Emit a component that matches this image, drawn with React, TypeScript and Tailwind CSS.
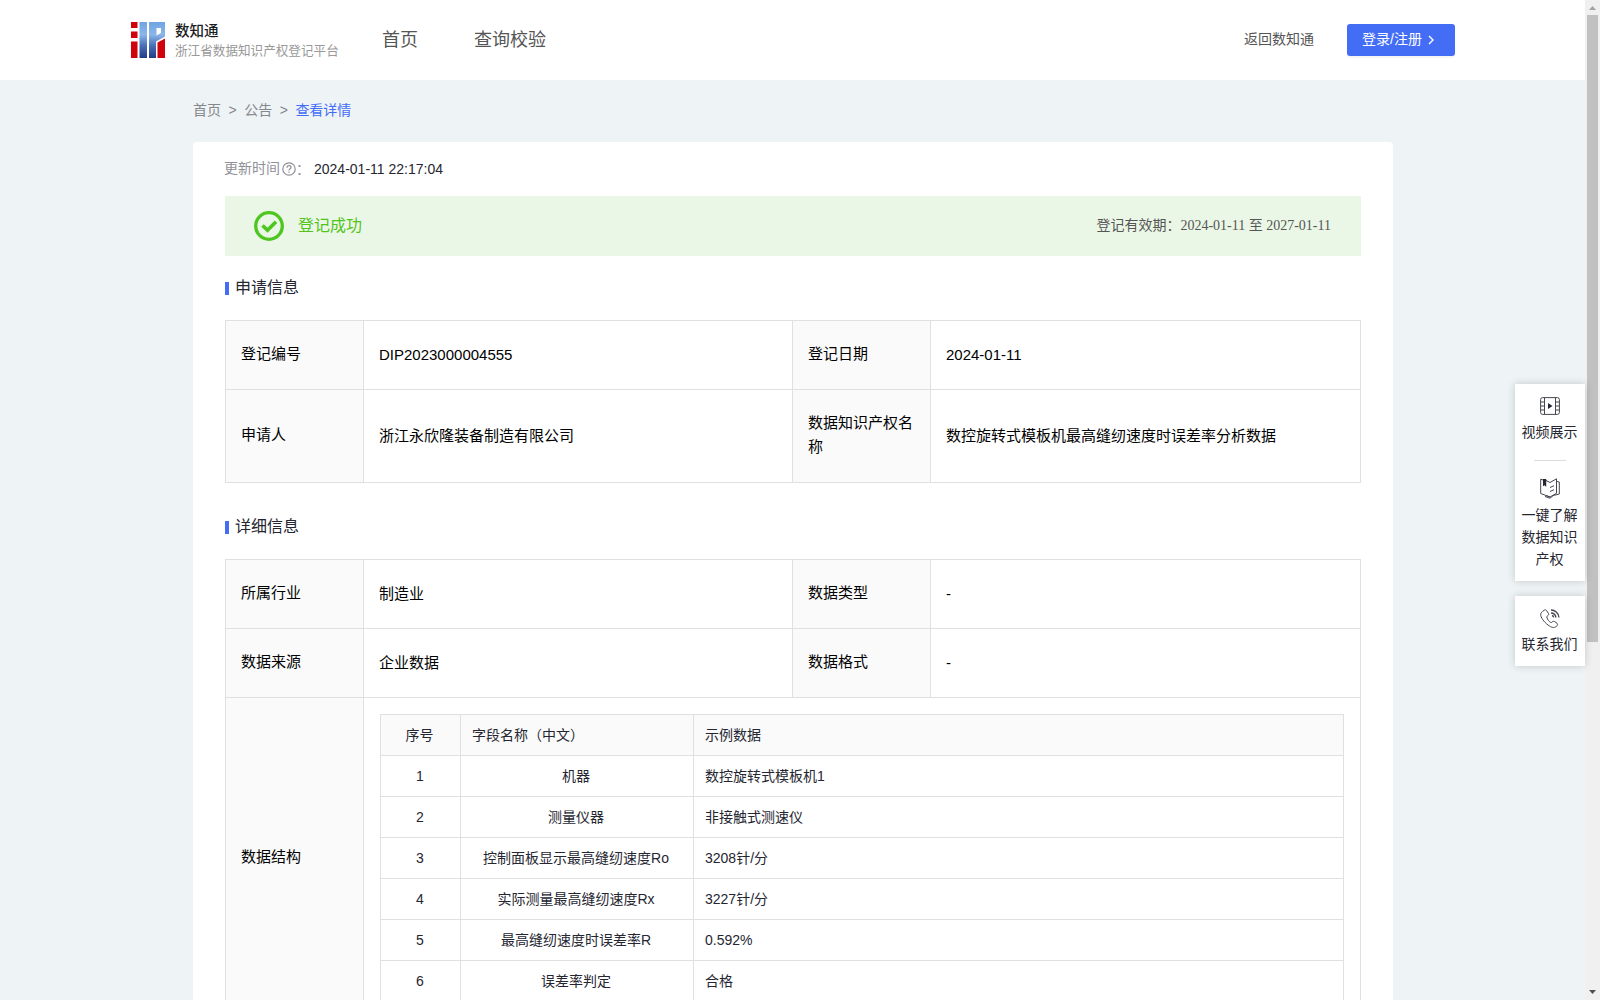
import React from "react";

interface InfoRow {
  label: string;
  value: string;
  label2: string;
  value2: string;
  height: string;
}

const applyRows: InfoRow[] = [
  { label: "登记编号", value: "DIP2023000004555", label2: "登记日期", value2: "2024-01-11", height: "h-[69px]" },
  {
    label: "申请人",
    value: "浙江永欣隆装备制造有限公司",
    label2: "数据知识产权名称",
    value2: "数控旋转式模板机最高缝纫速度时误差率分析数据",
    height: "h-[93px]",
  },
];

const detailRows: InfoRow[] = [
  { label: "所属行业", value: "制造业", label2: "数据类型", value2: "-", height: "h-[69px]" },
  { label: "数据来源", value: "企业数据", label2: "数据格式", value2: "-", height: "h-[69px]" },
];

const fields = [
  { name: "机器", sample: "数控旋转式模板机1" },
  { name: "测量仪器", sample: "非接触式测速仪" },
  { name: "控制面板显示最高缝纫速度Ro", sample: "3208针/分" },
  { name: "实际测量最高缝纫速度Rx", sample: "3227针/分" },
  { name: "最高缝纫速度时误差率R", sample: "0.592%" },
  { name: "误差率判定", sample: "合格" },
];

const Logo = () => (
  <svg width="34" height="36" viewBox="0 0 34 36" className="shrink-0">
    <defs>
      <linearGradient id="logoBlue" x1="0" y1="0" x2="0" y2="36" gradientUnits="userSpaceOnUse">
        <stop offset="0" stopColor="#6fa5e2" />
        <stop offset="0.35" stopColor="#8bb6e8" />
        <stop offset="0.65" stopColor="#4a70b8" />
        <stop offset="1" stopColor="#243a86" />
      </linearGradient>
    </defs>
    <path d="M0 0h6.500v6H0zM0 9.500h6.500V16H0zM0 19.500h6.500V36H0z" fill="#d0020b" />
    <path
      d="M8.500 0H16v36H8.500zM18 0h16v14.500l-9 5V36h-7zM25.500 6v7.500l4.500-2.500V6z"
      fill="url(#logoBlue)"
      fillRule="evenodd"
    />
    <path d="M26.500 20.500l7.500-4V36h-7.500z" fill="#d0020b" />
  </svg>
);

const SectionTitle = ({ children }: { children: React.ReactNode }) => (
  <div className="flex h-6 items-center text-[16px] text-[#252631]">
    <span className="mr-[6px] mt-[3px] h-[13px] w-1 bg-[#446df6]" />
    <span className="pt-px">{children}</span>
  </div>
);

const InfoCells = ({ row }: { row: InfoRow }) => (
  <tr className={row.height}>
    <td className="border border-[#e0e0e0] bg-[#fafafa] px-[15px] pb-0.5">{row.label}</td>
    <td className="border border-[#e0e0e0] px-[15px] pb-px">{row.value}</td>
    <td className="border border-[#e0e0e0] bg-[#fafafa] px-[15px] pb-0.5">{row.label2}</td>
    <td className="border border-[#e0e0e0] px-[15px] pb-px">{row.value2}</td>
  </tr>
);

const InfoTable = ({ rows, children }: { rows: InfoRow[]; children?: React.ReactNode }) => (
  <table className="w-[1136px] table-fixed border-collapse text-[15px] leading-6 text-black">
    <colgroup>
      <col className="w-[138px]" />
      <col className="w-[429px]" />
      <col className="w-[138px]" />
      <col className="w-[430px]" />
    </colgroup>
    <tbody>
      {rows.map((row) => (
        <InfoCells key={row.label} row={row} />
      ))}
      {children}
    </tbody>
  </table>
);

const FieldTable = () => (
  <table className="w-[964px] table-fixed border-collapse text-[14px] leading-5 text-[#252631]">
    <colgroup>
      <col className="w-[80px]" />
      <col className="w-[233px]" />
      <col className="w-[650px]" />
    </colgroup>
    <tbody>
      <tr className="h-[41px] bg-[#fafafa]">
        <td className="border border-[#e0e0e0] pb-px pr-0.5 text-center">序号</td>
        <td className="border border-[#e0e0e0] px-[11px] pb-px">字段名称（中文）</td>
        <td className="border border-[#e0e0e0] px-[11px] pb-px">示例数据</td>
      </tr>
      {fields.map((f, i) => (
        <tr key={f.name} className="h-[41px]">
          <td className="border border-[#e0e0e0] pb-px pr-px text-center">{i + 1}</td>
          <td className="border border-[#e0e0e0] pb-px pr-0.5 text-center">{f.name}</td>
          <td className="border border-[#e0e0e0] px-[11px] pb-px">{f.sample}</td>
        </tr>
      ))}
    </tbody>
  </table>
);

const Header = () => (
  <header className="flex h-20 items-center bg-white pl-[131px] pr-[130px]">
    <Logo />
    <div className="ml-[10px] w-[164px] whitespace-nowrap pt-[2px]">
      <div className="text-[14.5px] font-medium leading-[20px] text-[#1d1d1f]">数知通</div>
      <div className="text-[12.6px] leading-[20px] text-[#999]">浙江省数据知识产权登记平台</div>
    </div>
    <nav className="ml-[43px] flex gap-14 text-[18px] text-[#555]">
      <span>首页</span>
      <span>查询校验</span>
    </nav>
    <span className="ml-auto pb-px text-[14px] text-[#555]">返回数知通</span>
    <button className="ml-[33px] flex h-8 w-[108px] items-center rounded-[3px] bg-[#446df6] pb-px pl-[15px] text-[14px] text-white shadow-[0_2px_0_rgba(0,0,0,0.04)]">
      登录/注册
      <svg width="7" height="10" viewBox="0 0 7 10" fill="none" stroke="currentColor" strokeWidth="1.4" className="ml-[6px]">
        <path d="M1 1l4 4-4 4" />
      </svg>
    </button>
  </header>
);

const SideBar = () => (
  <aside className="absolute right-[15px] top-[384px] w-[70px] text-center text-[14px] leading-[22px] text-[#252631]">
    <div className="flex h-[197px] flex-col items-center bg-white shadow-[0_0_8px_rgba(0,0,0,0.18)]">
      <svg width="20" height="18" viewBox="0 0 20 18" fill="none" stroke="#45464f" className="mt-[13px]">
        <rect x="0.600" y="0.600" width="18.800" height="16.800" rx="2" />
        <path d="M4.500 1v16M15.500 1v16M1 5h3.500M1 9h3.500M1 13h3.500M15.500 5H19M15.500 9H19M15.500 13H19" />
        <path d="M8 6l4.500 3L8 12z" fill="#252631" stroke="none" />
      </svg>
      <div className="mr-px mt-[6px]">视频展示</div>
      <div className="mt-[17px] h-px w-8 bg-[#dcdcdc]" />
      <svg width="20" height="21" viewBox="0 0 20 21" fill="none" stroke="#45464f" strokeLinejoin="round" className="mt-[17px]">
        <path d="M.7 1.200L3 2M6 2.500l4 2L16.500.8v14.500L10 19l-9.300-3.500V1.200M10 19l-4-1.500" />
        <path d="M17 3.500l2.300.5v12l-6 1.500L10 20.200 5 18.500M10 9.500l4-1.800M10 13.500l4-1.800" />
        <path d="M3 1h3.200v8L4.600 7.300 3 8.200z" fill="#252631" stroke="none" />
      </svg>
      <div className="mr-px mt-[5px] w-14">一键了解数据知识产权</div>
    </div>
    <div className="mt-[15px] flex h-[70px] flex-col items-center bg-white shadow-[0_0_8px_rgba(0,0,0,0.18)]">
      <svg width="20" height="20" viewBox="0 0 20 20" fill="none" stroke="#45464f" className="mt-[13px]">
        <path d="M2.500 2.500l2-1.500c.8-.5 1.500-.2 2 .5l2 3c.5.800.2 1.500-.5 2-1.500 1-1.500 1.500-.5 3.500 1 2 2.500 3.500 4 3.500 1.500-1.500 2.500-1.500 3.500-.7l2 1.500c.8.700.7 1.700 0 2.500-2 2.200-4.500 2.200-7.500.2C5.500 14.500 1.500 10 .8 6.500.5 4.700 1 3.500 2.500 2.500z" />
        <path d="M11 1c4 0 7.500 3 8 7.500M11 4c2.500 0 4.500 2 5 4.500M12 6.500c1 .2 1.500.8 1.700 1.800" strokeWidth="1.300" />
      </svg>
      <div className="mr-px mt-[4px]">联系我们</div>
    </div>
  </aside>
);

const ScrollBar = () => (
  <div className="flex h-full w-[15px] shrink-0 flex-col items-center bg-[#f0f0f0]">
    <svg width="15" height="15" viewBox="0 0 15 15">
      <path d="M4 10h7L7.500 6z" fill="#a3a3a3" />
    </svg>
    <div className="h-[627px] w-[11px] bg-[#c1c1c1]" />
    <svg width="15" height="15" viewBox="0 0 15 15" className="mt-auto">
      <path d="M4 5h7L7.500 9z" fill="#505050" />
    </svg>
  </div>
);

export default function App() {
  return (
    <div className="relative flex h-[1000px] w-[1600px] overflow-hidden font-['Liberation_Sans','Noto_Sans_CJK_SC',sans-serif]">
      <div className="h-full w-[1585px] overflow-hidden bg-[#eef3f6]">
        <Header />
        <main className="ml-[193px] w-[1200px]">
          <div className="flex h-[62px] items-center gap-[7.5px] pb-px text-[14px] text-[#86878c]">
            <span>首页</span>
            <span>&gt;</span>
            <span>公告</span>
            <span>&gt;</span>
            <span className="text-[#446df6]">查看详情</span>
          </div>
          <div className="h-[1100px] rounded-[4px] bg-white px-8 pt-4">
            <div className="flex h-[22px] items-center text-[14px] text-[#909097]">
              <span className="-ml-px pb-px">更新时间</span>
              <svg width="14" height="14" viewBox="0 0 14 14" fill="none" stroke="#909097" strokeWidth="1.2" className="ml-[2px]">
                <circle cx="7" cy="7" r="6.200" />
                <path d="M5 5.700C5 4.400 5.900 3.700 7 3.700s2 .7 2 1.800C9 6.800 7 6.800 7 8.400M7 9.400v1.300" />
              </svg>
              <span className="w-[18px]">：</span>
              <span className="pt-px text-[14px] text-[#252631]">2024-01-11 22:17:04</span>
            </div>
            <div className="mt-4 flex h-[60px] items-center bg-[#ebf7e6] pl-[29px] pr-[30px]">
              <svg width="30" height="30" viewBox="0 0 30 30" fill="none" stroke="#4dc71f">
                <circle cx="15" cy="15" r="13.300" strokeWidth="3.300" />
                <path d="M8.500 14.500l5 4.700L22 10.700" strokeWidth="3.700" />
              </svg>
              <span className="ml-[14px] text-[16px] text-[#52c41a]">登记成功</span>
              <span className="ml-auto pb-[2px] font-['Liberation_Serif','Noto_Sans_CJK_SC',serif] text-[14px] text-[#555]">
                登记有效期：2024-01-11 至 2027-01-11
              </span>
            </div>
            <div className="mb-[21px] mt-[19px]">
              <SectionTitle>申请信息</SectionTitle>
            </div>
            <InfoTable rows={applyRows} />
            <div className="mb-[21px] mt-[31px]">
              <SectionTitle>详细信息</SectionTitle>
            </div>
            <InfoTable rows={detailRows}>
              <tr className="h-[320px]">
                <td className="border border-[#e0e0e0] bg-[#fafafa] px-[15px] pb-0.5">数据结构</td>
                <td colSpan={3} className="border border-[#e0e0e0] px-4 align-top">
                  <div className="pt-4">
                    <FieldTable />
                  </div>
                </td>
              </tr>
            </InfoTable>
          </div>
        </main>
      </div>
      <ScrollBar />
      <SideBar />
    </div>
  );
}
